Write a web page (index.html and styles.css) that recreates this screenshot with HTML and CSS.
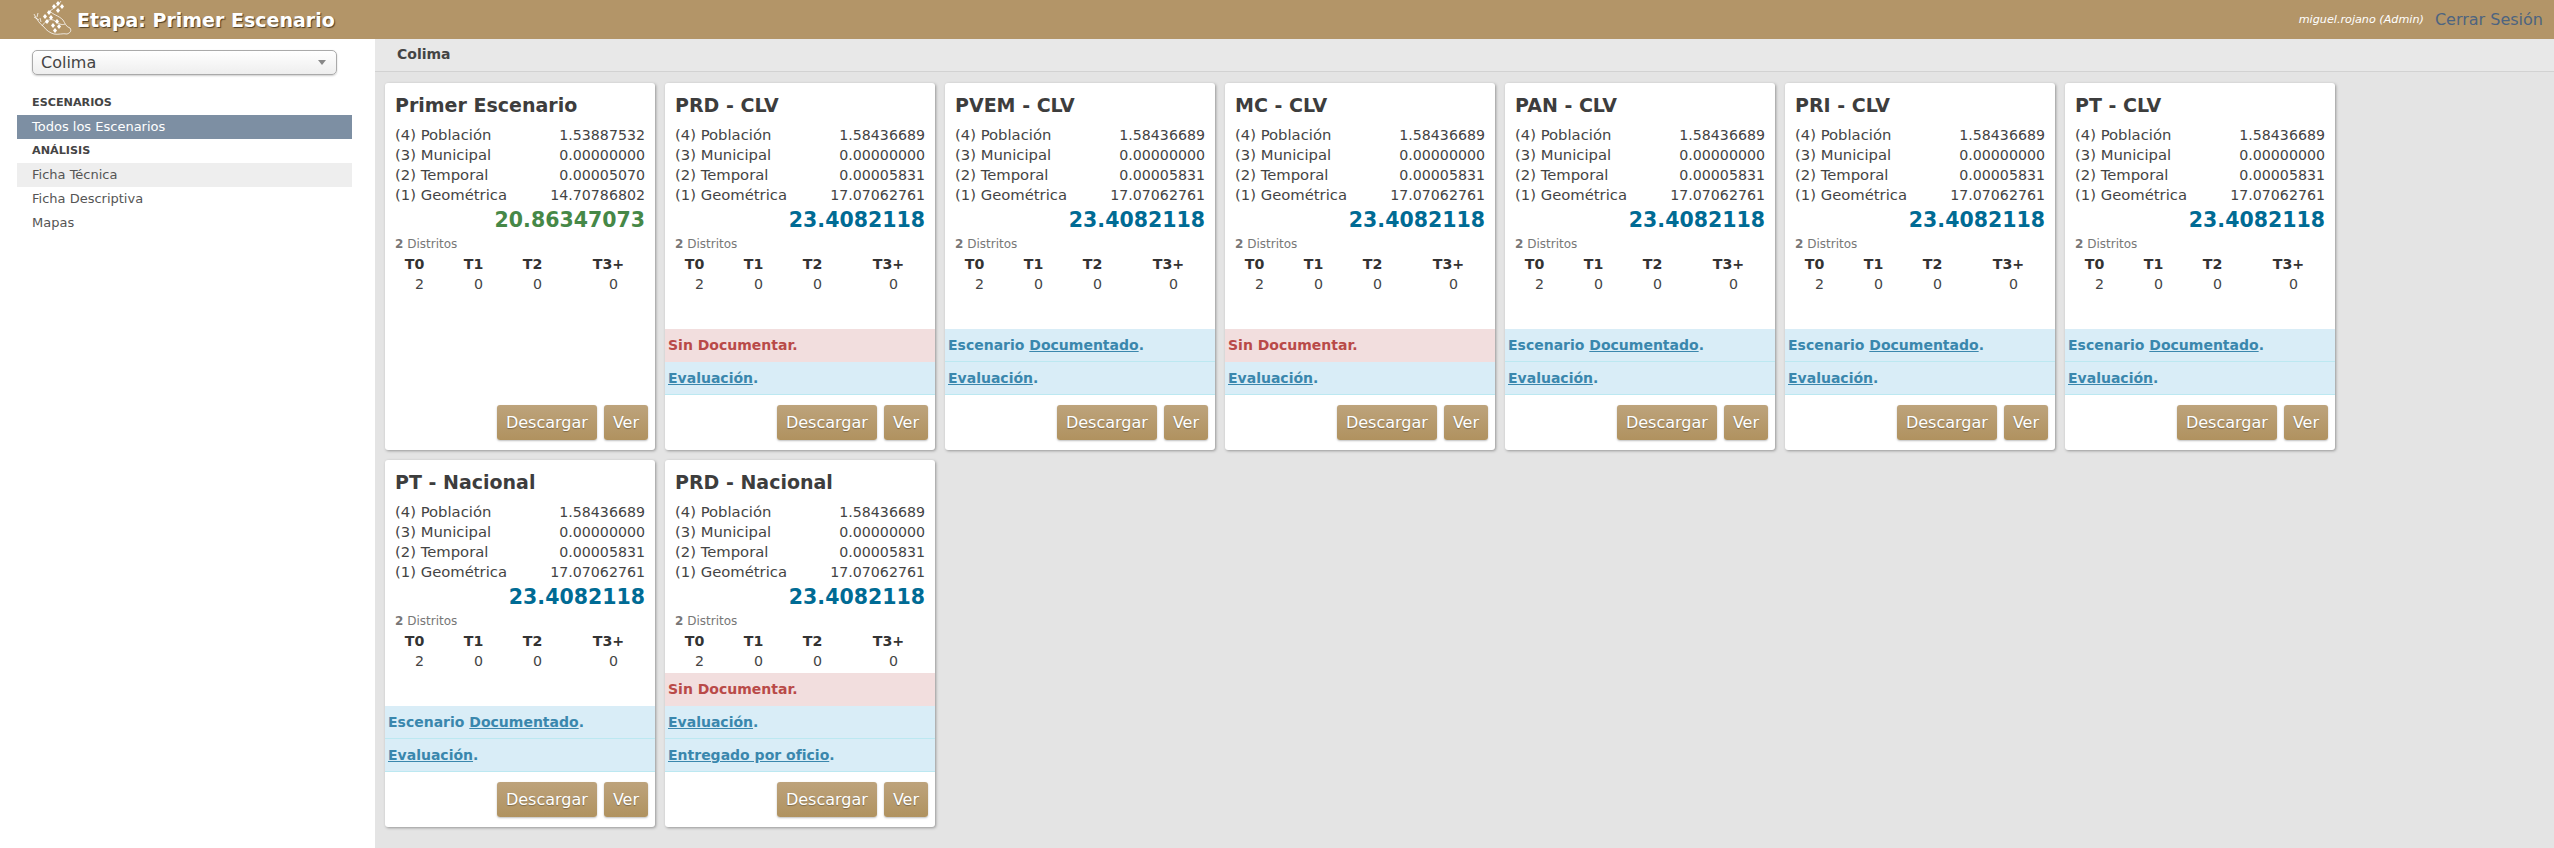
FILE: index.html
```html
<!DOCTYPE html>
<html lang="es">
<head>
  <meta charset="UTF-8">
  <title>Etapa: Primer Escenario</title>
  <link rel="stylesheet" href="styles.css">
</head>
<body>

  <header class="topbar">
    <div class="brand">
      <svg class="logo" width="50" height="39" viewBox="0 0 50 39">
        <g class="logo-lines">
          <path d="M9 14 C12 20 15 24 19 27 C21 30 25 33 29 34 C33 35 38 33 42 34 C45 33 47 31 45 28 C41 27 40 23 38 20 C33 15 28 15 25 11 C29 8 34 5 36 1"/>
          <path d="M17 26 C21 20 26 18 30 21 C35 25 38 25 40 24"/>
          <path d="M13 13 L12 17 M9 17 L14 20 M15 18 L16 22"/>
        </g>
        <g class="logo-dots">
          <path d="M33 1l2 2.500-2 2.500-2-2.500z"/><path d="M37 4l2 2.500-2 2.500-2-2.500z"/><path d="M29 4l2 2.500-2 2.500-2-2.500z"/>
          <path d="M33 8l2 2.500-2 2.500-2-2.500z"/><path d="M24 10l2 2.500-2 2.500-2-2.500z"/><path d="M20 14l2 2.500-2 2.500-2-2.500z"/>
          <path d="M26 15l2 2.500-2 2.500-2-2.500z"/><path d="M22 19l2 2.500-2 2.500-2-2.500z"/><path d="M32 19l2 2.500-2 2.500-2-2.500z"/>
          <path d="M28 23l2 2.500-2 2.500-2-2.500z"/><path d="M34 24l2 2.500-2 2.500-2-2.500z"/><path d="M30 28l2 2.500-2 2.500-2-2.500z"/>
        </g>
      </svg>
      <span class="brand-title">Etapa: Primer Escenario</span>
    </div>
    <div class="session">
      <span class="user">miguel.rojano (Admin)</span>
      <a class="logout" href="#">Cerrar Sesión</a>
    </div>
  </header>

  <div class="layout">
    <aside class="sidebar">
      <div class="state-select">
        <span>Colima</span>
        <span class="caret"></span>
      </div>
      <div class="nav-header first">ESCENARIOS</div>
      <a class="nav-item active" href="#">Todos los Escenarios</a>
      <div class="nav-header">ANÁLISIS</div>
      <a class="nav-item hover" href="#">Ficha Técnica</a>
      <a class="nav-item" href="#">Ficha Descriptiva</a>
      <a class="nav-item" href="#">Mapas</a>
    </aside>

    <main class="content">
      <div class="subheader">Colima</div>
      <div class="cards">

        <div class="card">
          <div class="card-body">
            <h2>Primer Escenario</h2>
            <div class="score"><span>(4) Población</span><span>1.53887532</span></div>
            <div class="score"><span>(3) Municipal</span><span>0.00000000</span></div>
            <div class="score"><span>(2) Temporal</span><span>0.00005070</span></div>
            <div class="score"><span>(1) Geométrica</span><span>14.70786802</span></div>
            <div class="total best">20.86347073</div>
            <div class="districts"><b>2</b> Distritos</div>
            <div class="tiers"><b>T0</b><b>T1</b><b>T2</b><b>T3+</b><span>2</span><span>0</span><span>0</span><span>0</span></div>
          </div>
          <div class="card-footer"><a class="btn" href="#">Descargar</a><a class="btn" href="#">Ver</a></div>
        </div>

        <div class="card">
          <div class="card-body">
            <h2>PRD - CLV</h2>
            <div class="score"><span>(4) Población</span><span>1.58436689</span></div>
            <div class="score"><span>(3) Municipal</span><span>0.00000000</span></div>
            <div class="score"><span>(2) Temporal</span><span>0.00005831</span></div>
            <div class="score"><span>(1) Geométrica</span><span>17.07062761</span></div>
            <div class="total">23.4082118</div>
            <div class="districts"><b>2</b> Distritos</div>
            <div class="tiers"><b>T0</b><b>T1</b><b>T2</b><b>T3+</b><span>2</span><span>0</span><span>0</span><span>0</span></div>
          </div>
          <div class="alert danger">Sin Documentar.</div>
          <div class="alert info"><a href="#">Evaluación</a>.</div>
          <div class="card-footer"><a class="btn" href="#">Descargar</a><a class="btn" href="#">Ver</a></div>
        </div>

        <div class="card">
          <div class="card-body">
            <h2>PVEM - CLV</h2>
            <div class="score"><span>(4) Población</span><span>1.58436689</span></div>
            <div class="score"><span>(3) Municipal</span><span>0.00000000</span></div>
            <div class="score"><span>(2) Temporal</span><span>0.00005831</span></div>
            <div class="score"><span>(1) Geométrica</span><span>17.07062761</span></div>
            <div class="total">23.4082118</div>
            <div class="districts"><b>2</b> Distritos</div>
            <div class="tiers"><b>T0</b><b>T1</b><b>T2</b><b>T3+</b><span>2</span><span>0</span><span>0</span><span>0</span></div>
          </div>
          <div class="alert info">Escenario <a href="#">Documentado</a>.</div>
          <div class="alert info"><a href="#">Evaluación</a>.</div>
          <div class="card-footer"><a class="btn" href="#">Descargar</a><a class="btn" href="#">Ver</a></div>
        </div>

        <div class="card">
          <div class="card-body">
            <h2>MC - CLV</h2>
            <div class="score"><span>(4) Población</span><span>1.58436689</span></div>
            <div class="score"><span>(3) Municipal</span><span>0.00000000</span></div>
            <div class="score"><span>(2) Temporal</span><span>0.00005831</span></div>
            <div class="score"><span>(1) Geométrica</span><span>17.07062761</span></div>
            <div class="total">23.4082118</div>
            <div class="districts"><b>2</b> Distritos</div>
            <div class="tiers"><b>T0</b><b>T1</b><b>T2</b><b>T3+</b><span>2</span><span>0</span><span>0</span><span>0</span></div>
          </div>
          <div class="alert danger">Sin Documentar.</div>
          <div class="alert info"><a href="#">Evaluación</a>.</div>
          <div class="card-footer"><a class="btn" href="#">Descargar</a><a class="btn" href="#">Ver</a></div>
        </div>

        <div class="card">
          <div class="card-body">
            <h2>PAN - CLV</h2>
            <div class="score"><span>(4) Población</span><span>1.58436689</span></div>
            <div class="score"><span>(3) Municipal</span><span>0.00000000</span></div>
            <div class="score"><span>(2) Temporal</span><span>0.00005831</span></div>
            <div class="score"><span>(1) Geométrica</span><span>17.07062761</span></div>
            <div class="total">23.4082118</div>
            <div class="districts"><b>2</b> Distritos</div>
            <div class="tiers"><b>T0</b><b>T1</b><b>T2</b><b>T3+</b><span>2</span><span>0</span><span>0</span><span>0</span></div>
          </div>
          <div class="alert info">Escenario <a href="#">Documentado</a>.</div>
          <div class="alert info"><a href="#">Evaluación</a>.</div>
          <div class="card-footer"><a class="btn" href="#">Descargar</a><a class="btn" href="#">Ver</a></div>
        </div>

        <div class="card">
          <div class="card-body">
            <h2>PRI - CLV</h2>
            <div class="score"><span>(4) Población</span><span>1.58436689</span></div>
            <div class="score"><span>(3) Municipal</span><span>0.00000000</span></div>
            <div class="score"><span>(2) Temporal</span><span>0.00005831</span></div>
            <div class="score"><span>(1) Geométrica</span><span>17.07062761</span></div>
            <div class="total">23.4082118</div>
            <div class="districts"><b>2</b> Distritos</div>
            <div class="tiers"><b>T0</b><b>T1</b><b>T2</b><b>T3+</b><span>2</span><span>0</span><span>0</span><span>0</span></div>
          </div>
          <div class="alert info">Escenario <a href="#">Documentado</a>.</div>
          <div class="alert info"><a href="#">Evaluación</a>.</div>
          <div class="card-footer"><a class="btn" href="#">Descargar</a><a class="btn" href="#">Ver</a></div>
        </div>

        <div class="card">
          <div class="card-body">
            <h2>PT - CLV</h2>
            <div class="score"><span>(4) Población</span><span>1.58436689</span></div>
            <div class="score"><span>(3) Municipal</span><span>0.00000000</span></div>
            <div class="score"><span>(2) Temporal</span><span>0.00005831</span></div>
            <div class="score"><span>(1) Geométrica</span><span>17.07062761</span></div>
            <div class="total">23.4082118</div>
            <div class="districts"><b>2</b> Distritos</div>
            <div class="tiers"><b>T0</b><b>T1</b><b>T2</b><b>T3+</b><span>2</span><span>0</span><span>0</span><span>0</span></div>
          </div>
          <div class="alert info">Escenario <a href="#">Documentado</a>.</div>
          <div class="alert info"><a href="#">Evaluación</a>.</div>
          <div class="card-footer"><a class="btn" href="#">Descargar</a><a class="btn" href="#">Ver</a></div>
        </div>

        <div class="card">
          <div class="card-body">
            <h2>PT - Nacional</h2>
            <div class="score"><span>(4) Población</span><span>1.58436689</span></div>
            <div class="score"><span>(3) Municipal</span><span>0.00000000</span></div>
            <div class="score"><span>(2) Temporal</span><span>0.00005831</span></div>
            <div class="score"><span>(1) Geométrica</span><span>17.07062761</span></div>
            <div class="total">23.4082118</div>
            <div class="districts"><b>2</b> Distritos</div>
            <div class="tiers"><b>T0</b><b>T1</b><b>T2</b><b>T3+</b><span>2</span><span>0</span><span>0</span><span>0</span></div>
          </div>
          <div class="alert info">Escenario <a href="#">Documentado</a>.</div>
          <div class="alert info"><a href="#">Evaluación</a>.</div>
          <div class="card-footer"><a class="btn" href="#">Descargar</a><a class="btn" href="#">Ver</a></div>
        </div>

        <div class="card">
          <div class="card-body">
            <h2>PRD - Nacional</h2>
            <div class="score"><span>(4) Población</span><span>1.58436689</span></div>
            <div class="score"><span>(3) Municipal</span><span>0.00000000</span></div>
            <div class="score"><span>(2) Temporal</span><span>0.00005831</span></div>
            <div class="score"><span>(1) Geométrica</span><span>17.07062761</span></div>
            <div class="total">23.4082118</div>
            <div class="districts"><b>2</b> Distritos</div>
            <div class="tiers"><b>T0</b><b>T1</b><b>T2</b><b>T3+</b><span>2</span><span>0</span><span>0</span><span>0</span></div>
          </div>
          <div class="alert danger">Sin Documentar.</div>
          <div class="alert info"><a href="#">Evaluación</a>.</div>
          <div class="alert info"><a href="#">Entregado por oficio</a>.</div>
          <div class="card-footer"><a class="btn" href="#">Descargar</a><a class="btn" href="#">Ver</a></div>
        </div>

      </div>
    </main>
  </div>

</body>
</html>
```

FILE: styles.css
```css
* {
  box-sizing: border-box;
}
html, body {
  height: 100%;
}
body {
  margin: 0;
  font-family: "DejaVu Sans", Verdana, sans-serif;
  font-size: 14px;
  color: #444;
  background-color: #fff;
  overflow: hidden;
}
a {
  color: inherit;
}

.topbar {
  height: 39px;
  display: flex;
  justify-content: space-between;
  align-items: center;
  padding: 0 11px 0 25px;
  background-color: #b39568;
}
.brand {
  display: flex;
  align-items: center;
  gap: 2px;
}
.logo {
  display: block;
}
.logo-lines {
  fill: none;
  stroke: rgba(255, 255, 255, 0.75);
  stroke-width: 1;
}
.logo-dots {
  fill: #fff;
}
.brand-title {
  font-size: 19px;
  font-weight: bold;
  color: #fff;
  text-shadow: 1px 1px 1px #4d3d25;
}
.session {
  display: flex;
  align-items: center;
  gap: 11px;
}
.user {
  font-size: 11.200px;
  font-style: italic;
  color: #fff;
}
.logout {
  font-size: 16px;
  color: #4d6480;
  text-decoration: none;
}

.layout {
  display: flex;
  height: calc(100% - 39px);
}
.sidebar {
  width: 375px;
  flex-shrink: 0;
  padding: 11px 0 0 17px;
}
.state-select {
  width: 305px;
  height: 25px;
  margin-left: 15px;
  padding: 0 9px 0 8px;
  display: flex;
  justify-content: space-between;
  align-items: center;
  font-size: 16px;
  color: #444;
  border: 1px solid #aaa;
  border-radius: 5px;
  background: linear-gradient(#fff, #eee);
  box-shadow: 0 1px 2px rgba(0, 0, 0, 0.2);
}
.caret {
  width: 0;
  height: 0;
  margin-right: 1px;
  border-left: 4px solid transparent;
  border-right: 4px solid transparent;
  border-top: 5px solid #888;
}
.nav-header {
  height: 24px;
  line-height: 24px;
  padding-left: 15px;
  font-size: 11.200px;
  font-weight: bold;
  color: #444;
  text-shadow: 0 1px 0 rgba(255, 255, 255, 0.5);
}
.nav-header.first {
  margin-top: 16px;
}
.nav-item {
  display: block;
  width: 335px;
  height: 24px;
  line-height: 24px;
  padding-left: 15px;
  font-size: 13px;
  color: #555;
  text-decoration: none;
}
.nav-item.active {
  color: #fff;
  background-color: #7d8fa3;
}
.nav-item.hover {
  background-color: #eee;
}

.content {
  flex: 1;
  background-color: #e4e4e4;
}
.subheader {
  height: 33px;
  padding-left: 22px;
  line-height: 31px;
  font-size: 14px;
  font-weight: bold;
  color: #444;
  background-color: #e8e8e8;
  border-bottom: 1px solid #d2d2d2;
}
.cards {
  display: flex;
  flex-wrap: wrap;
  align-content: flex-start;
  gap: 10px;
  padding: 11px 10px 0;
}
.card {
  width: 270px;
  height: 367px;
  display: flex;
  flex-direction: column;
  background-color: #fff;
  border-radius: 3px;
  box-shadow: 1px 1px 3px rgba(0, 0, 0, 0.35);
}
.card-body {
  flex: 1;
  padding: 9px 10px 0;
}
.card h2 {
  margin: 0 0 6px;
  font-size: 19px;
  line-height: 27px;
  color: #3d3d3d;
}
.score {
  display: flex;
  justify-content: space-between;
  height: 20px;
  line-height: 20px;
  font-size: 14.200px;
}
.score span:first-child {
  font-size: 14.800px;
}
.total {
  height: 30px;
  line-height: 30px;
  text-align: right;
  font-size: 20.500px;
  font-weight: bold;
  color: #006b94;
}
.total.best {
  color: #468847;
}
.districts {
  height: 19px;
  line-height: 19px;
  font-size: 12px;
  color: #777;
}
.tiers {
  display: grid;
  grid-template-columns: 59px 59px 59px 1fr;
  margin: 0 -10px;
  line-height: 20px;
  text-align: center;
  font-size: 14.200px;
}
.tiers b {
  color: #333;
}
.tiers span {
  padding-left: 10px;
}
.alert {
  height: 33px;
  line-height: 33px;
  padding-left: 3px;
  font-size: 14px;
  font-weight: bold;
}
.alert.danger {
  color: #b94a48;
  background-color: #f2dede;
}
.alert.info {
  color: #3a87ad;
  background-color: #d9edf7;
  border-bottom: 1px solid #bce8f1;
}
.card-footer {
  display: flex;
  justify-content: flex-end;
  gap: 7px;
  padding: 10px 7px 10px 0;
}
.btn {
  height: 35px;
  line-height: 35px;
  padding: 0 9px;
  font-size: 16px;
  color: #fff;
  text-decoration: none;
  text-shadow: 0 1px 1px rgba(0, 0, 0, 0.3);
  border-radius: 3px;
  background: linear-gradient(#bda37c, #b0925f);
  box-shadow: 0 1px 2px rgba(0, 0, 0, 0.25);
}
```
